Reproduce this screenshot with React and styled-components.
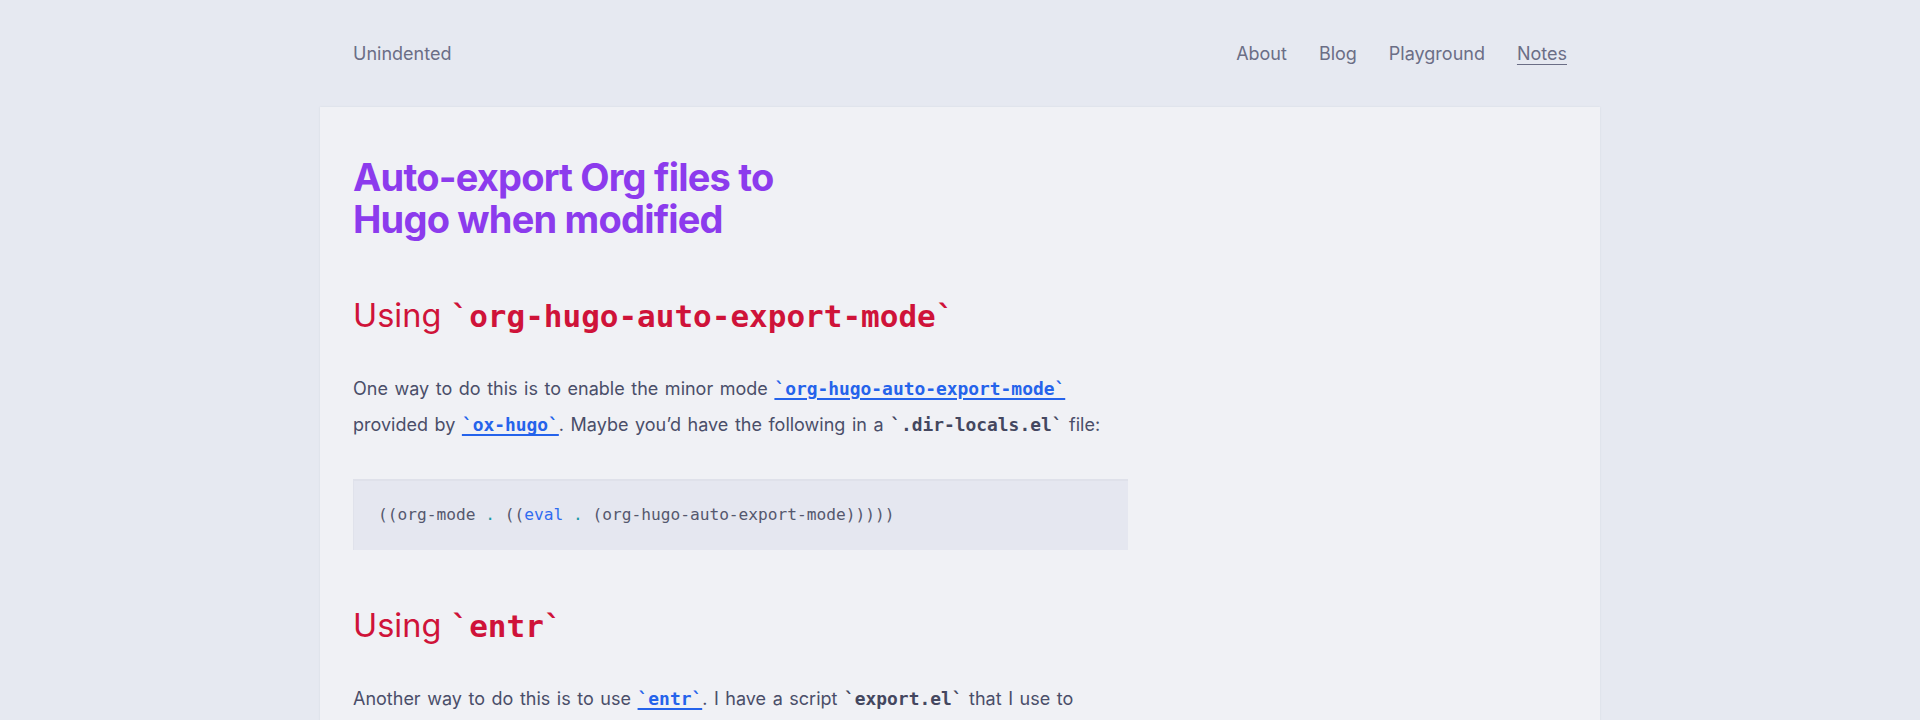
import styled, { createGlobalStyle } from 'styled-components';

const GlobalStyle = createGlobalStyle`
    html, body {
        margin: 0;
        padding: 0;
        background: #e6e9f1;
    }
    body {
        font-family: Inter, "Liberation Sans", sans-serif;
        color: #4a4e69;
    }
`;

const Page = styled.div`
    width: 1280px;
    margin: 0 auto;
`;

const Header = styled.header`
    height: 107px;
    padding: 0 33px;
    display: flex;
    align-items: center;
    justify-content: space-between;
    font-size: 18px;
    color: #6b6e86;
`;

const Brand = styled.a`
    color: inherit;
    text-decoration: none;
`;

const Nav = styled.nav`
    display: flex;
    gap: 32px;
`;

const NavLink = styled.a`
    color: inherit;
    text-decoration: ${(p) => (p.$active ? 'underline' : 'none')};
    text-underline-offset: 4px;
`;

const Card = styled.main`
    background: #f0f1f5;
    box-shadow: 0 0 2px rgba(40, 45, 80, 0.08);
    padding: 49px 33px 60px;
    min-height: 700px;
`;

const Title = styled.h1`
    margin: 0;
    max-width: 460px;
    font-size: 38px;
    line-height: 42px;
    font-weight: 700;
    letter-spacing: -0.8px;
    color: #8c3bed;
`;

const Heading = styled.h2`
    margin: 55px 0 33px;
    font-size: 32.5px;
    line-height: 41.6px;
    font-weight: 400;
    color: #cf1339;
`;

const HeadingCode = styled.code`
    font-family: "DejaVu Sans Mono", "Liberation Mono", monospace;
    font-weight: 700;
    font-size: 31px;
`;

const Prose = styled.p`
    margin: 0 0 35px;
    max-width: 775px;
    font-size: 18px;
    line-height: 36.7px;
    word-spacing: 1.5px;
`;

const Code = styled.code`
    font-family: "DejaVu Sans Mono", "Liberation Mono", monospace;
    font-weight: 700;
    font-size: 17.9px;
    word-spacing: 0;
    color: ${(p) => (p.$link ? '#2563eb' : '#44475f')};
`;

const CodeLink = styled.a`
    color: #2563eb;
    text-decoration: underline;
    text-decoration-thickness: 2px;
    text-underline-offset: 3px;
`;

const Block = styled.pre`
    margin: 0;
    width: 775px;
    box-sizing: border-box;
    padding: 22px 24px 23px;
    background: #e5e7f0;
    border-top: 2px solid #dfe1ea;
    border-left: 1px solid #e0e2eb;
    font-family: "DejaVu Sans Mono", "Liberation Mono", monospace;
    font-size: 16.2px;
    line-height: 24px;
    color: #55586e;
`;

const Dot = styled.span`
    color: #1a9aa5;
`;

const Keyword = styled.span`
    color: #2f6cf0;
`;

export default function App() {
    return (
        <>
            <GlobalStyle />
            <Page>
                <Header>
                    <Brand href="#">Unindented</Brand>
                    <Nav>
                        <NavLink href="#">About</NavLink>
                        <NavLink href="#">Blog</NavLink>
                        <NavLink href="#">Playground</NavLink>
                        <NavLink href="#" $active>Notes</NavLink>
                    </Nav>
                </Header>
                <Card>
                    <Title>Auto-export Org files to Hugo when modified</Title>

                    <Heading>
                        Using <HeadingCode>`org-hugo-auto-export-mode`</HeadingCode>
                    </Heading>
                    <Prose>
                        One way to do this is to enable the minor mode{' '}
                        <CodeLink href="#"><Code $link>`org-hugo-auto-export-mode`</Code></CodeLink>{' '}
                        provided by <CodeLink href="#"><Code $link>`ox-hugo`</Code></CodeLink>. Maybe you’d have
                        the following in a <Code>`.dir-locals.el`</Code> file:
                    </Prose>
                    <Block>
                        ((org-mode <Dot>.</Dot> ((<Keyword>eval</Keyword> <Dot>.</Dot> (org-hugo-auto-export-mode)))))
                    </Block>

                    <Heading>
                        Using <HeadingCode>`entr`</HeadingCode>
                    </Heading>
                    <Prose>
                        Another way to do this is to use <CodeLink href="#"><Code $link>`entr`</Code></CodeLink>. I
                        have a script <Code>`export.el`</Code> that I use to export all my Org files to Hugo
                        Markdown, and I can run it whenever an Org file changes.
                    </Prose>
                </Card>
            </Page>
        </>
    );
}
